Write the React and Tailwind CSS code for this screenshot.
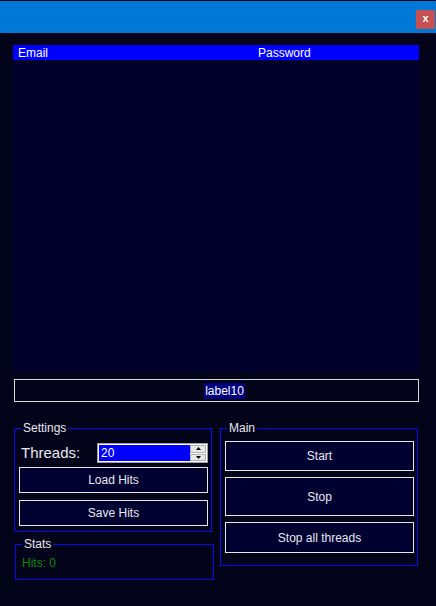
import React from 'react';

// dark WinForms-style checker window
const font = { fontFamily: '"Liberation Sans", Arial, sans-serif' };

function Group({ title, className, children }) {
    return (
        <div className={`relative border border-[#0a0af0] ${className}`}>
            <span className="absolute -top-[8px] left-[6px] px-[2px] bg-[#03031a] text-[12px] leading-[14px] text-[#e8e8f0]">
                {title}
            </span>
            {children}
        </div>
    );
}

function Btn({ children, className }) {
    return (
        <button className={`flex items-center justify-center border border-[#e6e6e6] bg-[#000030] text-[12px] text-[#e8e8f0] ${className}`}>
            {children}
        </button>
    );
}

export default function App() {
    return (
        <div className="w-[436px] h-[606px] bg-[#03031a] flex flex-col overflow-hidden" style={font}>
            {/* title bar */}
            <div className="mt-[1px] h-[32px] bg-[#0078d7] flex justify-end items-start">
                <div className="mt-[9px] mr-[1px] w-[19px] h-[19px] bg-[#c75050] flex items-center justify-center text-white text-[11px] font-bold leading-none pb-[2px]">
                    x
                </div>
            </div>

            {/* hits list */}
            <div className="ml-[13px] mt-[12px] w-[406px] h-[327px] bg-[#00002a] flex flex-col">
                <div className="h-[15px] bg-[#0000ff] flex items-center text-[12px] text-white leading-none">
                    <span className="ml-[5px] w-[240px]">Email</span>
                    <span>Password</span>
                </div>
            </div>

            {/* status label */}
            <div className="ml-[14px] mt-[7px] w-[405px] h-[23px] border border-[#d8d8d8] flex items-center justify-center">
                <span className="ml-[16px] bg-[#000080] text-white text-[12px] leading-[16px] px-[1px]">label10</span>
            </div>

            <div className="flex mt-[26px]">
                <div className="flex flex-col">
                    <Group title="Settings" className="ml-[14px] w-[198px] h-[104px] flex flex-col">
                        <div className="flex items-center mt-[14px]">
                            <span className="ml-[6px] w-[76px] text-[15px] text-[#e8e8f0] leading-none -mt-[1px]">Threads:</span>
                            <div className="w-[111px] h-[20px] border border-[#a0a0a0] bg-white p-[1px] flex">
                                <div className="flex-1 bg-[#0000ff] text-white text-[12px] leading-[16px] pl-[2px]">20</div>
                                <div className="w-[16px] flex flex-col gap-[1px] bg-white">
                                    <div className="flex-1 bg-[#e8e8e8] border border-[#b0b0b0] flex items-center justify-center">
                                        <svg width="5" height="3" viewBox="0 0 5 3"><path d="M2.5 0L5 3H0z" fill="#000" /></svg>
                                    </div>
                                    <div className="flex-1 bg-[#e8e8e8] border border-[#b0b0b0] flex items-center justify-center">
                                        <svg width="5" height="3" viewBox="0 0 5 3"><path d="M0 0h5L2.5 3z" fill="#000" /></svg>
                                    </div>
                                </div>
                            </div>
                        </div>
                        <Btn className="ml-[4px] mt-[4px] w-[189px] h-[26px]">Load Hits</Btn>
                        <Btn className="ml-[4px] mt-[7px] w-[189px] h-[26px]">Save Hits</Btn>
                    </Group>
                    <Group title="Stats" className="ml-[15px] mt-[12px] w-[199px] h-[36px]">
                        <div className="ml-[6px] mt-[12px] text-[12px] leading-none text-[#0a8a0a]">Hits: 0</div>
                    </Group>
                </div>
                <Group title="Main" className="ml-[6px] w-[198px] h-[138px] flex flex-col">
                    <Btn className="ml-[4px] mt-[12px] w-[189px] h-[30px]">Start</Btn>
                    <Btn className="ml-[4px] mt-[6px] w-[189px] h-[39px]">Stop</Btn>
                    <Btn className="ml-[4px] mt-[6px] w-[189px] h-[31px]">Stop all threads</Btn>
                </Group>
            </div>
        </div>
    );
}
